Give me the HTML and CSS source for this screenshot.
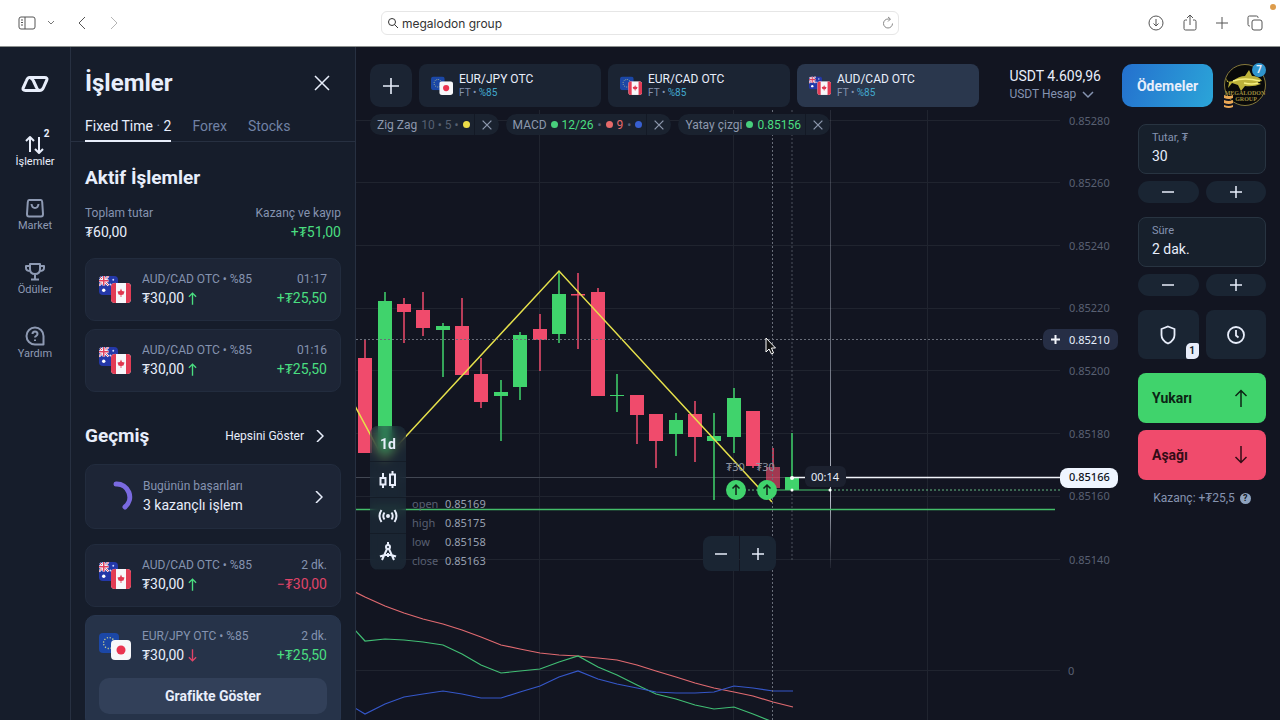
FILE: index.html
```html
<!DOCTYPE html>
<html lang="tr">
<head>
    <meta charset="UTF-8">
    <meta name="viewport" content="width=device-width, initial-scale=1.0">
    <title>İşlemler</title>
    <link rel="stylesheet" href="styles.css">
</head>
<body>

<!-- Shared flags and icons -->
<svg class="defs" width="0" height="0" aria-hidden="true">
    <defs>
        <clipPath id="round"><rect width="20" height="20" rx="4"/></clipPath>
        <symbol id="flag-au" viewBox="0 0 20 20">
            <g clip-path="url(#round)">
                <rect width="20" height="20" fill="#2438a8"/>
                <path d="M0 0L10 10M10 0L0 10" stroke="#fff" stroke-width="2.4"/>
                <path d="M0 0L10 10M10 0L0 10" stroke="#e0405e" stroke-width="1"/>
                <path d="M5 0V10M0 5H10" stroke="#fff" stroke-width="3"/>
                <path d="M5 0V10M0 5H10" stroke="#e0405e" stroke-width="1.6"/>
                <circle cx="5" cy="15" r="1.8" fill="#fff"/>
                <circle cx="15" cy="4" r="1" fill="#cfd9ff"/>
                <circle cx="12" cy="9" r="1" fill="#cfd9ff"/>
                <circle cx="17" cy="8" r="1" fill="#cfd9ff"/>
            </g>
        </symbol>
        <symbol id="flag-ca" viewBox="0 0 20 20">
            <g clip-path="url(#round)">
                <rect width="20" height="20" fill="#f7f7fa"/>
                <path d="M0 0H5V20H0ZM15 0H20V20H15Z" fill="#e23c55"/>
                <path d="M10 5.5L11 8L13.5 8.5L12.5 11.5L10.4 12V14H9.6V12L7.5 11.5L6.5 8.5L9 8Z" fill="#e0364f"/>
            </g>
        </symbol>
        <symbol id="flag-eu" viewBox="0 0 20 20">
            <rect width="20" height="20" rx="4" fill="#1b47a6"/>
            <circle cx="10" cy="10" r="5.5" fill="none" stroke="#c9cf8e" stroke-width="1.3" stroke-dasharray="1.2 1.68"/>
        </symbol>
        <symbol id="flag-jp" viewBox="0 0 20 20">
            <rect width="20" height="20" rx="4" fill="#f7f7fa"/>
            <circle cx="10" cy="10" r="4.5" fill="#ea3350"/>
        </symbol>
        <symbol id="aud-cad" viewBox="0 0 32 28">
            <use href="#flag-au" width="19" height="19"/>
            <use href="#flag-ca" x="12" y="7" width="20" height="20"/>
        </symbol>
        <symbol id="eur-cad" viewBox="0 0 32 28">
            <use href="#flag-eu" width="20" height="20"/>
            <use href="#flag-ca" x="12" y="7" width="20" height="20"/>
        </symbol>
        <symbol id="eur-jpy" viewBox="0 0 32 28">
            <use href="#flag-eu" width="20" height="20"/>
            <use href="#flag-jp" x="12" y="7" width="20" height="20"/>
        </symbol>
        <symbol id="close" viewBox="0 0 16 16"><path d="M1 1L15 15M15 1L1 15"/></symbol>
        <symbol id="minus" viewBox="0 0 12 12"><path d="M0 6H12"/></symbol>
        <symbol id="plus" viewBox="0 0 12 12"><path d="M0 6H12M6 0V12"/></symbol>
        <symbol id="chevron" viewBox="0 0 8 12"><path d="M1 0L7 6L1 12"/></symbol>
        <symbol id="arrow-up" viewBox="0 0 10 14"><path d="M5 14V1M1 5L5 1L9 5"/></symbol>
        <symbol id="arrow-down" viewBox="0 0 10 14"><path d="M5 0V13M1 9L5 13L9 9"/></symbol>
    </defs>
</svg>

<!-- Browser Bar -->
<header class="browser">
    <div class="browser-left">
        <button aria-label="Kenar çubuğu"><svg class="icon" width="18" height="14" viewBox="0 0 18 14"><rect x="1" y="1" width="16" height="12" rx="2"/><path d="M7 1V13M3 4H5M3 6.500H5M3 9H5"/></svg></button>
        <button aria-label="Sekme grupları"><svg class="icon small-chevron" width="6" height="4" viewBox="0 0 6 4"><path d="M0 0L3 3L6 0"/></svg></button>
        <button aria-label="Geri"><svg class="icon back" width="8" height="12"><use href="#chevron"/></svg></button>
        <button aria-label="İleri" disabled><svg class="icon forward" width="8" height="12"><use href="#chevron"/></svg></button>
    </div>
    <div class="address">
        <svg class="icon" width="10" height="10" viewBox="0 0 10 10"><circle cx="4" cy="4" r="3.5"/><path d="M6.500 6.500L10 10"/></svg>
        <input type="text" value="megalodon group" aria-label="Adres">
        <button aria-label="Yenile"><svg class="icon reload" width="10" height="12" viewBox="0 0 10 12"><path d="M9.500 6.500A4.500 4.500 0 1 1 5 2H7M5 0L7.500 2L5 4.500"/></svg></button>
    </div>
    <div class="browser-right">
        <button aria-label="İndirilenler"><svg class="icon" width="16" height="16" viewBox="0 0 16 16"><circle cx="8" cy="8" r="7"/><path d="M8 4V11M5.500 8.500L8 11L10.500 8.500"/></svg></button>
        <button aria-label="Paylaş"><svg class="icon" width="14" height="18" viewBox="0 0 14 18"><path d="M4 6H2.500Q1 6 1 7.500V14.500Q1 16 2.500 16H11.500Q13 16 13 14.500V7.500Q13 6 11.500 6H10M7 11V1M4 4L7 1L10 4"/></svg></button>
        <button aria-label="Yeni sekme"><svg class="icon" width="12" height="12"><use href="#plus"/></svg></button>
        <button aria-label="Sekmeler"><svg class="icon" width="16" height="16" viewBox="0 0 16 16"><rect x="5" y="5" width="10" height="10" rx="2"/><path d="M3 11H2.500Q1 11 1 9.500V2.500Q1 1 2.500 1H9.500Q11 1 11 2.500V3"/></svg></button>
    </div>
    <span class="recording"></span>
</header>

<div class="app">

    <!-- Navigation -->
    <nav class="nav">
        <svg class="logo" width="28" height="16" viewBox="0 0 28 16"><path d="M8.500 1.500H23.500Q27 1.500 25.600 4.500L22.500 11.500Q21.300 14.500 18.500 14.500H4.500Q1 14.500 2.400 11.500L5.500 4.500Q6.700 1.500 8.500 1.500ZM9.500 2Q11.500 2.500 12.500 5L15.500 11.500Q16.500 14 18.500 14.500"/></svg>
        <a href="#" class="nav-item active">
            <svg width="22" height="22" viewBox="0 0 22 22"><path d="M6 19V4M2 8L6 4L10 8M15 4V20M11 16L15 20L19 16"/></svg>
            <span>İşlemler</span>
            <b class="nav-count">2</b>
        </a>
        <a href="#" class="nav-item">
            <svg width="22" height="22" viewBox="0 0 22 22"><path d="M5 3H17Q18 3 18.200 5L19 17Q19 19.500 17 19.500H5Q3 19.500 3 17L3.800 5Q4 3 5 3ZM7.500 7Q8 11 11 11T14.500 7"/></svg>
            <span>Market</span>
        </a>
        <a href="#" class="nav-item">
            <svg width="22" height="22" viewBox="0 0 22 22"><path d="M6 3H16V8Q16 13 11 13T6 8ZM6 5H2V7Q2 10 6.500 10M16 5H20V7Q20 10 15.500 10M11 13V18M7 18.500H15"/></svg>
            <span>Ödüller</span>
        </a>
        <a href="#" class="nav-item">
            <svg width="22" height="22" viewBox="0 0 22 22"><path d="M19.500 18.500V11A8.500 8.500 0 1 0 11 19.500H19.500ZM8.500 9Q8.500 6.500 11 6.500T13.500 9Q13.500 10 12.200 10.800Q11 11.500 11 12.500M11 14.500V16"/></svg>
            <span>Yardım</span>
        </a>
    </nav>

    <!-- Trades Panel -->
    <aside class="panel">
        <div class="panel-header">
            <h1>İşlemler</h1>
            <button class="panel-close" aria-label="Kapat"><svg class="icon" width="16" height="16"><use href="#close"/></svg></button>
        </div>
        <div class="panel-tabs">
            <a href="#" class="active">Fixed Time<i> · </i>2</a>
            <a href="#">Forex</a>
            <a href="#">Stocks</a>
        </div>
        <div class="panel-body">
            <h2>Aktif İşlemler</h2>
            <div class="totals">
                <div><span>Toplam tutar</span><strong>₮60,00</strong></div>
                <div class="right"><span>Kazanç ve kayıp</span><strong class="green">+₮51,00</strong></div>
            </div>
            <div class="cards">
                <article class="card">
                    <div class="card-row">
                        <svg width="32" height="28"><use href="#aud-cad"/></svg>
                        <div><span>AUD/CAD OTC • %85</span><strong>₮30,00 <svg class="arrow green" width="9" height="13"><use href="#arrow-up"/></svg></strong></div>
                        <div class="right"><span>01:17</span><strong class="green">+₮25,50</strong></div>
                    </div>
                </article>
                <article class="card">
                    <div class="card-row">
                        <svg width="32" height="28"><use href="#aud-cad"/></svg>
                        <div><span>AUD/CAD OTC • %85</span><strong>₮30,00 <svg class="arrow green" width="9" height="13"><use href="#arrow-up"/></svg></strong></div>
                        <div class="right"><span>01:16</span><strong class="green">+₮25,50</strong></div>
                    </div>
                </article>
            </div>

            <div class="history-header">
                <h2>Geçmiş</h2>
                <a href="#">Hepsini Göster <svg class="icon" width="8" height="12"><use href="#chevron"/></svg></a>
            </div>
            <a href="#" class="card success">
                <svg width="34" height="34" viewBox="0 0 34 34"><path d="M17 4A13 13 0 0 1 26 27" fill="none" stroke="#7a6ae0" stroke-width="5" stroke-linecap="round"/></svg>
                <div><span>Bugünün başarıları</span><strong>3 kazançlı işlem</strong></div>
                <svg class="icon" width="8" height="12"><use href="#chevron"/></svg>
            </a>
            <div class="cards">
                <article class="card">
                    <div class="card-row">
                        <svg width="32" height="28"><use href="#aud-cad"/></svg>
                        <div><span>AUD/CAD OTC • %85</span><strong>₮30,00 <svg class="arrow green" width="9" height="13"><use href="#arrow-up"/></svg></strong></div>
                        <div class="right"><span>2 dk.</span><strong class="red">−₮30,00</strong></div>
                    </div>
                </article>
                <article class="card open">
                    <div class="card-row">
                        <svg width="32" height="28"><use href="#eur-jpy"/></svg>
                        <div><span>EUR/JPY OTC • %85</span><strong>₮30,00 <svg class="arrow red" width="9" height="13"><use href="#arrow-down"/></svg></strong></div>
                        <div class="right"><span>2 dk.</span><strong class="green">+₮25,50</strong></div>
                    </div>
                    <button class="show-chart">Grafikte Göster</button>
                </article>
            </div>
        </div>
    </aside>

    <!-- Workspace -->
    <main class="workspace">

        <!-- Price chart with MACD below -->
        <svg class="chart" viewBox="356 47 924 673" preserveAspectRatio="xMinYMin slice">
            <defs>
                <linearGradient id="fade" gradientUnits="userSpaceOnUse" x1="0" y1="110" x2="0" y2="568">
                    <stop offset="0" stop-color="#9aa0ae" stop-opacity=".15"/>
                    <stop offset=".5" stop-color="#9aa0ae" stop-opacity=".6"/>
                    <stop offset=".85" stop-color="#b9bdc9"/>
                    <stop offset="1" stop-color="#9aa0ae" stop-opacity=".1"/>
                </linearGradient>
            </defs>
            <g class="grid">
                <path d="M356 120.500H1060M356 182.500H1060M356 245.500H1060M356 308.500H1060M356 370.500H1060M356 433.500H1060M356 496.500H1060M356 559.500H1060M356 670.500H1060"/>
                <path d="M539.500 110V720M733.500 110V720M927.500 110V720"/>
            </g>
            <path d="M356 477.500H792" stroke="#424753"/>
            <rect x="830" y="110" width="1" height="458" fill="url(#fade)"/>

            <g class="axis">
                <text x="1069" y="125">0.85280</text>
                <text x="1069" y="187">0.85260</text>
                <text x="1069" y="250">0.85240</text>
                <text x="1069" y="312">0.85220</text>
                <text x="1069" y="375">0.85200</text>
                <text x="1069" y="438">0.85180</text>
                <text x="1069" y="500">0.85160</text>
                <text x="1069" y="564">0.85140</text>
                <text x="1068" y="675">0</text>
            </g>

            <!-- Candles -->
            <path class="wick down" d="M365 339V358M404 298V343M423 292V336M462 298V326M481 358V408M540 314V371M578 273V349M598 288V292M637 415V444M656 441V468M695 401V462M753 460V468M773 448V467"/>
            <path class="wick up" d="M385 292V301M443 323V377M501 380V441M520 332V400M559 271V343M617 374V412M676 413V456M714 413V500M734 388V453M792 433V477"/>
            <path class="body down" d="M365 358V453M404 304V312M423 310V328M462 326V375M481 374V402M540 329V340M578 294V295.500M598 292V396M637 395V415M656 414V441M695 414V437M753 411V466"/>
            <path class="body up" d="M385 301V453M443 326V330M501 392V396M520 335V387M559 294V334M617 395V396M676 420V434M714 436V441M734 398V437M792 477V490"/>
            <path class="body down past" d="M773 467V488"/>

            <path d="M356 509.500H1055" stroke="#43bd69" stroke-width="1.5"/>
            <polyline class="zigzag" points="355,406 384,460 559,271 772,502"/>

            <!-- MACD -->
            <polyline class="macd" stroke="#e06a70" points="355,592 365,597 385,606 404,613 423,619 443,624 462,630 481,637 501,645 520,649 540,653 559,655 578,656 598,658 617,660 637,665 656,671 676,677 695,683 714,688 734,692 753,696 773,702 793,707"/>
            <polyline class="macd" stroke="#41be74" points="355,630 365,641 385,639 404,640 423,642 443,645 462,654 481,665 501,673 520,671 540,669 559,662 578,656 598,667 617,675 637,685 656,694 676,699 695,705 714,709 734,707 753,714 773,722"/>
            <polyline class="macd" stroke="#3557c9" points="355,708 365,714 385,704 404,697 423,694 443,691 462,694 481,698 501,698 520,692 540,686 559,677 578,671 598,679 617,684 637,688 656,692 676,693 695,693 714,692 734,686 753,688 773,691 793,691"/>

            <!-- Crosshair and expiry -->
            <path class="dots" d="M356 339.500H1044M772.500 110V720"/>
            <path class="dots faint" d="M792 110V433M792 490V560"/>
            <path d="M792 477.500H1062" stroke="#f1f4fa" stroke-width="1.5"/>
            <path d="M776 490H830" stroke="#45c66d"/>
            <path d="M744 490H758M830 490H1060" stroke="#62b981" stroke-dasharray="2 2"/>
            <g fill="#fff"><circle cx="792" cy="478" r="2"/><circle cx="792" cy="490" r="1.5"/><circle cx="830" cy="490" r="1.5"/></g>

            <!-- Open trades -->
            <g class="stake">
                <text x="726" y="471">₮30</text>
                <text x="756" y="471">₮30</text>
            </g>
            <g class="marker">
                <circle cx="736" cy="490" r="10"/>
                <circle cx="767" cy="490" r="10"/>
                <path d="M736 495V485M732.500 488.500L736 485L739.500 488.500M767 495V485M763.500 488.500L767 485L770.500 488.500"/>
            </g>
            <rect x="805" y="466" width="41" height="21" rx="6" fill="#1c212f"/>
            <text class="label" x="811" y="481">00:14</text>

            <!-- Price labels -->
            <rect x="1043" y="329" width="75" height="21" rx="7" fill="#262e45"/>
            <path d="M1051 339.500H1060M1055.500 335V344" stroke="#f1f4fa" stroke-width="2"/>
            <text class="label" x="1069" y="344">0.85210</text>
            <rect x="1060" y="468" width="58" height="20" rx="8" fill="#eff5ff"/>
            <text class="label current" x="1069" y="481">0.85166</text>

            <!-- Pointer -->
            <path d="M766 338V352L769 349L771.500 354L773.500 353L771.500 348H775.500Z" fill="#111" stroke="#fff"/>
        </svg>

        <div class="topbar">
            <button class="add-asset" aria-label="Varlık ekle"><svg class="icon" width="16" height="16"><use href="#plus"/></svg></button>
            <button class="asset"><svg width="22" height="20"><use href="#eur-jpy"/></svg><span>EUR/JPY OTC<small>FT • <em>%85</em></small></span></button>
            <button class="asset"><svg width="22" height="20"><use href="#eur-cad"/></svg><span>EUR/CAD OTC<small>FT • <em>%85</em></small></span></button>
            <button class="asset active"><svg width="22" height="20"><use href="#aud-cad"/></svg><span>AUD/CAD OTC<small>FT • <em>%85</em></small></span></button>
            <button class="account"><span>USDT 4.609,96</span><small>USDT Hesap <svg class="icon" width="12" height="8" viewBox="0 0 12 8"><path d="M1 1L6 6L11 1"/></svg></small></button>
            <button class="payments">Ödemeler</button>
            <button class="avatar" aria-label="Profil">
                <svg width="42" height="46" viewBox="0 0 42 46">
                    <circle cx="21" cy="22" r="20.500" fill="#08090a" stroke="#86793b"/>
                    <path d="M3 19L9 18Q15 13 21 13L25 7L28 13Q35 13 38 18L33 19L37 21Q30 24 21 23L17 28L14 22L8 20L4 25L5 20L2 15Z" fill="#bdb23a"/>
                    <path d="M9 18Q20 14 36 18M20 20Q28 22 34 20" fill="none" stroke="#f6f080" stroke-width="1.5"/>
                    <text x="21" y="32" text-anchor="middle">MEGALODON</text>
                    <text x="22" y="38" text-anchor="middle">GROUP</text>
                    <path d="M0 32Q5 34 9 32V35Q5 37 0 35ZM0 37Q5 39 9 37V40Q5 42 0 40ZM0 42Q5 44 9 42V44Q5 46 0 44Z" fill="#eaa755"/>
                </svg>
                <span class="badge">7</span>
            </button>
        </div>

        <div class="desk">
            <div class="chips">
                <div class="chip"><span>Zig Zag</span><span class="dim">10 • 5 •</span><i class="dot yellow"></i><button aria-label="Zig Zag kaldır"><svg class="icon" width="10" height="10"><use href="#close"/></svg></button></div>
                <div class="chip"><span>MACD</span><i class="dot green-dot"></i><span class="green">12/26</span><span class="dim">•</span><i class="dot red-dot"></i><span class="coral">9</span><span class="dim">•</span><i class="dot blue"></i><button aria-label="MACD kaldır"><svg class="icon" width="10" height="10"><use href="#close"/></svg></button></div>
                <div class="chip"><span>Yatay çizgi</span><i class="dot green-dot"></i><span class="green">0.85156</span><button aria-label="Yatay çizgi kaldır"><svg class="icon" width="10" height="10"><use href="#close"/></svg></button></div>
            </div>

            <!-- Order form -->
            <form class="order">
                <div class="field"><label for="amount">Tutar, ₮</label><input id="amount" type="text" value="30"></div>
                <div class="pair step">
                    <button type="button" aria-label="Tutarı azalt"><svg class="icon" width="12" height="12"><use href="#minus"/></svg></button>
                    <button type="button" aria-label="Tutarı artır"><svg class="icon" width="12" height="12"><use href="#plus"/></svg></button>
                </div>
                <div class="field"><label for="duration">Süre</label><input id="duration" type="text" value="2 dak."></div>
                <div class="pair step">
                    <button type="button" aria-label="Süreyi azalt"><svg class="icon" width="12" height="12"><use href="#minus"/></svg></button>
                    <button type="button" aria-label="Süreyi artır"><svg class="icon" width="12" height="12"><use href="#plus"/></svg></button>
                </div>
                <div class="pair tools">
                    <button type="button" aria-label="Risksiz işlem"><svg class="icon" width="20" height="20" viewBox="0 0 20 20"><path d="M10 1.500L16.500 4V10Q16.500 15.500 10 18.500Q3.500 15.500 3.500 10V4Z"/></svg><span class="tool-count">1</span></button>
                    <button type="button" aria-label="Bekleyen emir"><svg class="icon" width="20" height="20" viewBox="0 0 20 20"><circle cx="10" cy="10" r="8"/><path d="M10 5V10.500L12.500 12.500"/></svg></button>
                </div>
                <button type="button" class="trade buy">Yukarı <svg class="icon" width="14" height="18" viewBox="0 0 14 18"><path d="M7 18V1.500M1.500 7L7 1.500L12.500 7"/></svg></button>
                <button type="button" class="trade sell">Aşağı <svg class="icon" width="14" height="18" viewBox="0 0 14 18"><path d="M7 0V16.500M1.500 11L7 16.500L12.500 11"/></svg></button>
                <p class="profit">Kazanç: +₮25,5 <button type="button" class="help" aria-label="Bilgi">?</button></p>
            </form>
        </div>

        <!-- Chart overlays -->
        <div class="chart-tools">
            <button>1d</button>
            <button aria-label="Grafik türü"><svg class="icon" width="18" height="18" viewBox="0 0 18 18"><path d="M4 2V6M4 14V17M1.500 7H6.500V13.500H1.500ZM13.500 0V3M13.500 14.500V17M11 3.500H16V14H11Z"/></svg></button>
            <button aria-label="Sinyaller"><svg class="icon" width="20" height="16" viewBox="0 0 20 16"><circle cx="10" cy="8" r="1"/><path d="M6.500 4.500Q4 8 6.500 11.500M13.500 4.500Q16 8 13.500 11.500M3.500 2Q-.5 8 3.500 14M16.500 2Q20.500 8 16.500 14"/></svg></button>
            <button aria-label="Çizimler"><svg class="icon" width="18" height="20" viewBox="0 0 18 20"><circle cx="9" cy="5" r="2"/><path d="M9 0V3M8 7L3 18M10 7L15 18M1 14.500Q9 11 17 14.500M9 11V15"/></svg></button>
        </div>
        <dl class="ohlc">
            <dt>open</dt><dd>0.85169</dd>
            <dt>high</dt><dd>0.85175</dd>
            <dt>low</dt><dd>0.85158</dd>
            <dt>close</dt><dd>0.85163</dd>
        </dl>
        <div class="zoom">
            <button aria-label="Uzaklaştır"><svg class="icon" width="12" height="12"><use href="#minus"/></svg></button>
            <button aria-label="Yakınlaştır"><svg class="icon" width="12" height="12"><use href="#plus"/></svg></button>
        </div>
    </main>
</div>

</body>
</html>
```
FILE: styles.css
```css
* {
    box-sizing: border-box;
}

body {
    margin: 0;
    height: 100vh;
    display: flex;
    flex-direction: column;
    overflow: hidden;
    background-color: #121521;
    color: #e8eefb;
    font-family: Roboto, "Noto Sans", sans-serif;
    font-size: 14px;
}

h1, h2, p, dl, dd {
    margin: 0;
}

a {
    color: inherit;
    text-decoration: none;
}

button {
    border: 0;
    padding: 0;
    background: none;
    color: inherit;
    font: inherit;
    cursor: pointer;
    display: flex;
    align-items: center;
    justify-content: center;
}

input {
    border: 0;
    padding: 0;
    width: 100%;
    min-width: 0;
    background: none;
    color: inherit;
    font: inherit;
    outline: 0;
}

.defs {
    position: absolute;
}

.icon {
    fill: none;
    stroke: currentColor;
    stroke-width: 1.5;
    overflow: visible;
}

.green {
    color: #4ade80;
}

.red {
    color: #e04468;
}

.coral {
    color: #e66a6a;
}

/* Browser Bar */
.browser {
    position: relative;
    flex: none;
    height: 47px;
    display: grid;
    grid-template-columns: 1fr 518px 1fr;
    align-items: center;
    background-color: #fff;
    border-bottom: 1px solid #8d918f;
    color: #555;
}

.browser .icon {
    stroke-width: 1;
}

.browser-left,
.browser-right {
    display: flex;
    align-items: center;
}

.browser-left {
    padding-left: 18px;
    gap: 12px;
}

.browser .small-chevron {
    color: #777;
}

.back {
    margin-left: 12px;
    transform: scaleX(-1);
}

.forward {
    margin-left: 12px;
    color: #b5b5b5;
}

.browser-right {
    justify-content: flex-end;
    gap: 19px;
    padding-right: 17px;
}

.address {
    height: 24px;
    display: flex;
    align-items: center;
    gap: 4px;
    padding: 0 5px 0 6px;
    border: 1px solid #e6e6e6;
    border-radius: 6px;
    color: #333;
    font: 12px Inter, sans-serif;
}

.reload {
    color: #888;
}

.recording {
    position: absolute;
    top: 4px;
    right: 4px;
    width: 6px;
    height: 6px;
    border-radius: 50%;
    background-color: #dd9c4b;
}

.app {
    flex: 1;
    min-height: 0;
    display: flex;
}

/* Navigation */
.nav {
    flex: none;
    width: 71px;
    display: flex;
    flex-direction: column;
    align-items: center;
    padding-top: 29px;
    background-color: #161d2b;
    border-right: 1px solid #273041;
}

.nav svg {
    fill: none;
    stroke: currentColor;
    stroke-width: 2;
    stroke-linejoin: round;
}

.logo {
    margin-bottom: 41px;
}

.nav .logo {
    stroke-width: 3;
}

.nav-item {
    position: relative;
    height: 64px;
    display: flex;
    flex-direction: column;
    align-items: center;
    gap: 1px;
    color: #8e9ab3;
    font-size: 11px;
    line-height: 12px;
}

.nav-item.active,
.logo {
    color: #e8eefb;
}

.nav-count {
    position: absolute;
    top: -5px;
    right: 5px;
    font-size: 10px;
}

/* Trades Panel */
.panel {
    flex: none;
    width: 285px;
    overflow: hidden;
    background-color: #161d2b;
    border-right: 1px solid #273041;
}

.panel-header {
    display: flex;
    align-items: center;
    justify-content: space-between;
    padding: 22px 25px 18px 14px;
}

h1 {
    font-size: 24px;
    line-height: 28px;
}

h2 {
    font-size: 19px;
    line-height: 24px;
}

.panel-tabs {
    display: flex;
    gap: 21px;
    padding: 0 14px;
    border-bottom: 1px solid #273041;
    color: #7182a5;
    line-height: 22px;
}

.panel-tabs a {
    height: 27px;
    margin-bottom: -1px;
    border-bottom: 2px solid transparent;
}

.panel-tabs i {
    color: #7182a5;
    font-style: normal;
}

.panel-tabs .active {
    color: #e8eefb;
    border-color: #e8eefb;
}

.panel-body {
    padding: 24px 14px 0;
}

.totals {
    display: flex;
    justify-content: space-between;
    margin: 15px 0;
}

.panel-body span {
    display: block;
    color: #8593b0;
    font-size: 12px;
    line-height: 16px;
}

.panel-body strong {
    display: block;
    font-weight: 400;
    line-height: 22px;
}

.right {
    margin-left: auto;
    text-align: right;
}

.cards {
    display: flex;
    flex-direction: column;
    gap: 8px;
}

.card {
    padding: 12px 13px 11px;
    border: 1px solid #222c3e;
    border-radius: 10px;
    background-color: #1d2536;
}

.card-row {
    display: flex;
    align-items: center;
    gap: 11px;
}

.arrow {
    fill: none;
    stroke: currentColor;
    stroke-width: 1.5;
    vertical-align: -2px;
}

.history-header {
    display: flex;
    align-items: center;
    justify-content: space-between;
    margin: 32px 0 16px;
}

.history-header a {
    display: flex;
    align-items: center;
    gap: 12px;
    padding-right: 17px;
    font-size: 12px;
}

.success {
    display: flex;
    align-items: center;
    gap: 10px;
    padding: 13px 17px 12px 13px;
    margin-bottom: 15px;
}

.success .icon {
    margin-left: auto;
}

.card.open {
    padding-bottom: 13px;
    background-color: #263349;
    border-color: #28364e;
}

.show-chart {
    width: 100%;
    height: 36px;
    margin-top: 12px;
    border-radius: 10px;
    background-color: #324059;
    font-weight: 700;
}

/* Workspace */
.workspace {
    position: relative;
    flex: 1;
    min-width: 0;
    overflow: hidden;
}

.chart {
    position: absolute;
    width: 100%;
    height: 100%;
    font-family: "Noto Sans", sans-serif;
    font-size: 11px;
    fill: none;
}

.grid {
    stroke: #20242f;
}

.axis {
    fill: #596072;
}

.wick {
    stroke-width: 1.5;
}

.body {
    stroke-width: 14;
}

.up {
    stroke: #40d36c;
}

.down {
    stroke: #f04b6c;
}

.past {
    opacity: .65;
}

.zigzag {
    stroke: #e5e04b;
    stroke-width: 1.5;
}

.macd {
    stroke-width: 1.2;
}

.dots {
    stroke: #686d79;
    stroke-dasharray: 2 2;
}

.faint {
    opacity: .7;
}

.stake {
    fill: #8e93a0;
}

.marker circle {
    fill: #40d36c;
}

.marker path {
    stroke: #10251a;
    stroke-width: 1.5;
}

.label {
    fill: #e8eefb;
}

.label.current {
    fill: #10131c;
    font-weight: 500;
}

/* Topbar */
.topbar {
    position: relative;
    display: flex;
    gap: 7px;
    padding: 17px 14px 0;
}

.topbar > button {
    height: 43px;
}

.add-asset {
    width: 42px;
    border-radius: 10px;
    background-color: #1b2433;
}

.add-asset .icon {
    stroke-width: 1.2;
}

.asset {
    flex: 0 1 182px;
    justify-content: flex-start;
    gap: 6px;
    padding-left: 12px;
    border-radius: 8px;
    background-color: #1b2433;
    font-size: 12px;
    line-height: 14px;
    text-align: left;
}

.asset.active {
    background-color: #2a374d;
}

.asset small {
    display: block;
    color: #8593b0;
    font-size: 10px;
}

.asset em {
    color: #42a9cf;
    font-style: normal;
}

.account {
    margin-left: auto;
    flex-direction: column;
    align-items: flex-start;
    justify-content: flex-start;
    padding-top: 3px;
    line-height: 18px;
}

.account small {
    color: #8593b0;
    font-size: 12px;
}

.account .icon {
    margin-left: 3px;
    vertical-align: -1px;
}

.payments {
    width: 91px;
    margin-left: 14px;
    border-radius: 10px;
    background: linear-gradient(110deg, #2470ce, #2ba5d8);
    font-weight: 700;
}

.avatar {
    position: relative;
    margin-left: 4px;
}

.avatar text {
    fill: #9a8b3e;
    font: 700 6px "Liberation Serif", serif;
}

.badge {
    position: absolute;
    top: -1px;
    right: 0;
    width: 14px;
    height: 14px;
    border-radius: 50%;
    background-color: #2f94cc;
    font-size: 10px;
    font-weight: 700;
    line-height: 14px;
}

/* Indicator Chips */
.desk {
    position: relative;
    display: flex;
    align-items: flex-start;
    justify-content: space-between;
    padding: 7px 14px 0;
}

.chips {
    display: flex;
    gap: 7px;
}

.chip {
    height: 21px;
    display: flex;
    align-items: center;
    gap: 4px;
    padding-left: 7px;
    border-radius: 11px;
    background-color: #1a222f;
    color: #8d98ad;
    font-size: 12px;
}

.chip .dim {
    color: #566072;
}

.chip button {
    width: 25px;
    height: 21px;
    border-left: 1px solid #131925;
}

.chip .icon {
    stroke-width: 2;
}

.dot {
    width: 7px;
    height: 7px;
    border-radius: 50%;
}

.yellow {
    background-color: #ecdc48;
}

.green-dot {
    background-color: #48cf7d;
}

.red-dot {
    background-color: #e66a6a;
}

.blue {
    background-color: #385fd0;
}

/* Order Form */
.order {
    width: 128px;
    margin-top: 10px;
}

.field {
    height: 50px;
    padding: 5px 13px;
    border: 1px solid #283441;
    border-radius: 8px;
    background-color: #17202c;
}

.field label {
    display: block;
    color: #8593b0;
    font-size: 11px;
    line-height: 16px;
}

.field input {
    display: block;
    line-height: 20px;
}

.pair {
    display: grid;
    grid-template-columns: 1fr 1fr;
    gap: 7px;
}

.pair button {
    background-color: #1a2533;
}

.step {
    margin: 7px 0 14px;
}

.step button {
    height: 22px;
    border-radius: 11px;
}

.tools button {
    position: relative;
    height: 49px;
    border-radius: 8px;
}

.tools .icon {
    stroke-width: 1.8;
}

.tool-count {
    position: absolute;
    right: 0;
    bottom: 0;
    width: 13px;
    height: 16px;
    border-radius: 5px 2px;
    background-color: #e8eefb;
    color: #161d2b;
    font-size: 10px;
    font-weight: 700;
    line-height: 16px;
}

.trade {
    width: 100%;
    height: 50px;
    justify-content: space-between;
    padding: 0 18px 0 14px;
    border-radius: 8px;
    font-weight: 700;
}

.buy {
    margin-top: 14px;
    background-color: #40d36c;
    color: #0c2415;
}

.sell {
    margin-top: 7px;
    background-color: #f04b6c;
    color: #330c16;
}

.profit {
    display: flex;
    align-items: center;
    justify-content: center;
    gap: 5px;
    margin-top: 9px;
    color: #8593b0;
    font-size: 12px;
    line-height: 18px;
}

.help {
    width: 11px;
    height: 11px;
    border-radius: 50%;
    background-color: #8ea3bf;
    color: #121521;
    font-size: 9px;
    font-weight: 700;
}

/* Chart Overlays */
.chart-tools {
    position: absolute;
    top: 379px;
    left: 14px;
    width: 36px;
    overflow: hidden;
    border-radius: 8px;
    background-color: rgba(34, 53, 68, .5);
    backdrop-filter: blur(5px);
    font-weight: 700;
}

.chart-tools button {
    width: 100%;
    height: 36px;
    border-bottom: 1px solid #141c27;
}

.chart-tools .icon {
    stroke-width: 2;
}

.ohlc {
    position: absolute;
    top: 447px;
    left: 56px;
    display: grid;
    grid-template-columns: 33px auto;
    color: #98a0b0;
    font-family: "Noto Sans", sans-serif;
    font-size: 11px;
    line-height: 19px;
}

.ohlc dt {
    color: #596072;
}

.zoom {
    position: absolute;
    top: 489px;
    left: 347px;
    display: flex;
    gap: 1px;
}

.zoom button {
    width: 36px;
    height: 35px;
    background-color: #1a2533;
}

.zoom button:first-child {
    border-radius: 8px 0 0 8px;
}

.zoom button:last-child {
    border-radius: 0 8px 8px 0;
}
```
